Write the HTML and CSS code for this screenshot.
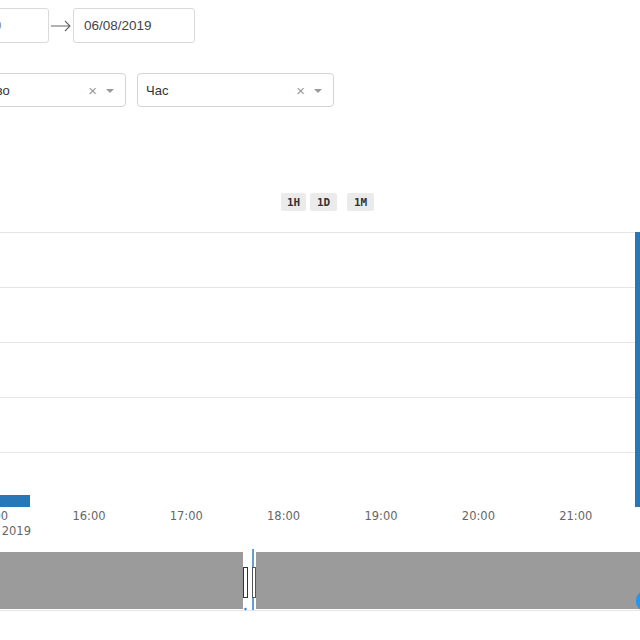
FILE: index.html
```html
<!DOCTYPE html>
<html>
<head>
<meta charset="utf-8">
<link rel="stylesheet" href="styles.css">
</head>
<body>
<div class="dates">
  <div class="date-input date-input-from">06/07/2019</div>
  <div class="arrow">
    <svg width="22" height="12" viewBox="0 0 22 12"><path d="M1 6H20M15 1L20 6L15 11" fill="none" stroke="#666" stroke-width="1.1"/></svg>
  </div>
  <div class="date-input">06/08/2019</div>
</div>
<div class="selects">
  <div class="select select-first">
    <span class="select-value">Количество</span>
    <span class="clear">×</span>
    <span class="caret"></span>
  </div>
  <div class="select">
    <span class="select-value">Час</span>
    <span class="clear">×</span>
    <span class="caret"></span>
  </div>
</div>
<div class="ranges">
  <span class="range-btn">1H</span>
  <span class="range-btn">1D</span>
  <span class="range-btn range-btn-m">1M</span>
</div>
<svg class="chart" width="640" height="429" viewBox="0 211 640 429">
  <g stroke="#e6e6e6" stroke-width="1">
    <line x1="0" x2="640" y1="232.5" y2="232.5"/>
    <line x1="0" x2="640" y1="287.5" y2="287.5"/>
    <line x1="0" x2="640" y1="342.5" y2="342.5"/>
    <line x1="0" x2="640" y1="397.5" y2="397.5"/>
    <line x1="0" x2="640" y1="452.5" y2="452.5"/>
  </g>
  <rect x="0" y="495" width="30" height="12" fill="#2878b8"/>
  <rect x="635" y="232" width="5" height="275" fill="#2878b8"/>
  <g class="axis-label" text-anchor="middle">
    <text x="-8.4" y="520">15:00</text>
    <text x="89" y="520">16:00</text>
    <text x="186.3" y="520">17:00</text>
    <text x="283.6" y="520">18:00</text>
    <text x="381" y="520">19:00</text>
    <text x="478.4" y="520">20:00</text>
    <text x="575.8" y="520">21:00</text>
    <text x="31" y="535" text-anchor="end">авг. 2019</text>
  </g>
  <rect x="0" y="552" width="243" height="57" fill="#9b9b9b"/>
  <rect x="256" y="552" width="384" height="57" fill="#9b9b9b"/>
  <line x1="0" x2="640" y1="610.5" y2="610.5" stroke="#e6e6e6"/>
  <line x1="253" x2="253" y1="549" y2="610" stroke="#2f7fc1" stroke-width="1.5"/>
  <circle cx="245.5" cy="609" r="1.2" fill="#2f7fc1"/>
  <rect x="243.5" y="567.5" width="4" height="30" fill="#fff" stroke="#333"/>
  <rect x="252.5" y="567.5" width="3" height="30" fill="#fff" stroke="#555"/>
  <circle cx="647" cy="601" r="11" fill="#2196f3"/>
</svg>
</body>
</html>
```
FILE: styles.css
```css
html, body {
  margin: 0;
  padding: 0;
  background: #fff;
}
body {
  width: 640px;
  height: 640px;
  overflow: hidden;
  font-family: "Liberation Sans", Arial, sans-serif;
}
.dates {
  display: flex;
  align-items: center;
  margin: 8px 0 0 -77px;
}
.date-input {
  width: 122px;
  height: 35px;
  box-sizing: border-box;
  border: 1px solid #d9d9d9;
  border-radius: 3px;
  padding: 0 10px;
  display: flex;
  align-items: center;
  font-size: 13.5px;
  color: #444;
  flex: none;
}
.date-input-from {
  width: 126px;
  color: #888;
}
.arrow {
  width: 24px;
  flex: none;
  display: flex;
  justify-content: center;
  align-items: center;
}
.arrow svg {
  display: block;
}
.selects {
  display: flex;
  gap: 11px;
  margin: 30px 0 0 -69px;
}
.select {
  width: 197px;
  height: 34px;
  box-sizing: border-box;
  border: 1px solid #d4d4d4;
  border-radius: 4px;
  padding: 0 11px 0 8px;
  display: flex;
  align-items: center;
  font-size: 13px;
  color: #333;
  flex: none;
}
.select-first {
  width: 195px;
}
.select-value {
  flex: 1;
  white-space: nowrap;
}
.clear {
  color: #999;
  font-size: 15px;
  margin-right: 9px;
}
.caret {
  width: 0;
  height: 0;
  border-left: 4px solid transparent;
  border-right: 4px solid transparent;
  border-top: 4px solid #999;
  margin-top: 2px;
}
.ranges {
  display: flex;
  margin: 86px 0 0 281px;
  height: 18px;
}
.range-btn {
  width: 25px;
  height: 18px;
  background: #ebebeb;
  border-radius: 2px;
  display: flex;
  align-items: center;
  justify-content: center;
  font-family: "DejaVu Sans Mono", monospace;
  font-weight: bold;
  font-size: 11px;
  color: #333;
  margin-right: 4px;
}
.range-btn + .range-btn {
  width: 27px;
}
.range-btn-m {
  margin-left: 6px;
}
.chart {
  display: block;
}
.axis-label {
  font-family: "DejaVu Sans", Verdana, sans-serif;
  font-size: 11.5px;
  fill: #666;
}
```
